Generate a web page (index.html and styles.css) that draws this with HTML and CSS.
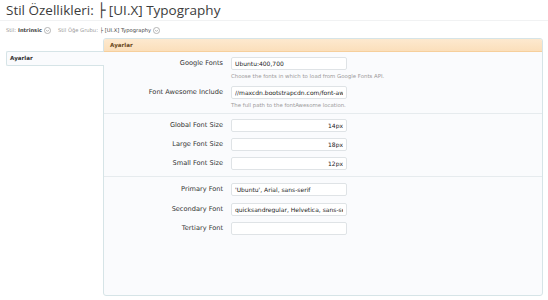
FILE: index.html
```html
<!DOCTYPE html>
<html lang="tr">
<head>
    <meta charset="UTF-8">
    <title>Stil Özellikleri</title>
    <link rel="stylesheet" href="styles.css">
</head>
<body>
    <h1 class="page-title">Stil Özellikleri: ├ [UI.X] Typography</h1>
    <div class="crumbs">
        <span class="crumb-label">Stil:</span> <b>Intrinsic</b>
        <span class="drop"><svg viewBox="0 0 8 8"><circle cx="4" cy="4" r="3.5"/><path d="M2.3 3.3 4 5 5.7 3.3"/></svg></span>
        <span class="crumb-label gap">Stil Öğe Grubu:</span> <span class="crumb-val">├ [UI.X] Typography</span>
        <span class="drop"><svg viewBox="0 0 8 8"><circle cx="4" cy="4" r="3.5"/><path d="M2.3 3.3 4 5 5.7 3.3"/></svg></span>
    </div>

    <div class="layout">
        <ul class="tabs">
            <li class="tab active">Ayarlar</li>
        </ul>
        <div class="panel">
            <div class="panel-head">Ayarlar</div>

            <div class="section first">
                <div class="row">
                    <label class="row-label">Google Fonts</label>
                    <div class="row-field">
                        <input type="text" value="Ubuntu:400,700">
                        <p class="hint">Choose the fonts in which to load from Google Fonts API.</p>
                    </div>
                </div>
                <div class="row">
                    <label class="row-label">Font Awesome Include</label>
                    <div class="row-field">
                        <input type="text" value="//maxcdn.bootstrapcdn.com/font-awesome/4.2.0/css/font-awesome.min.css">
                        <p class="hint">The full path to the fontAwesome location.</p>
                    </div>
                </div>
            </div>

            <div class="section sizes">
                <div class="row">
                    <label class="row-label">Global Font Size</label>
                    <div class="row-field"><input type="text" class="num" value="14px"></div>
                </div>
                <div class="row">
                    <label class="row-label">Large Font Size</label>
                    <div class="row-field"><input type="text" class="num" value="18px"></div>
                </div>
                <div class="row">
                    <label class="row-label">Small Font Size</label>
                    <div class="row-field"><input type="text" class="num" value="12px"></div>
                </div>
            </div>

            <div class="section fonts">
                <div class="row">
                    <label class="row-label">Primary Font</label>
                    <div class="row-field"><input type="text" value="'Ubuntu', Arial, sans-serif"></div>
                </div>
                <div class="row">
                    <label class="row-label">Secondary Font</label>
                    <div class="row-field"><input type="text" value="quicksandregular, Helvetica, sans-serif"></div>
                </div>
                <div class="row">
                    <label class="row-label">Tertiary Font</label>
                    <div class="row-field"><input type="text" value=""></div>
                </div>
            </div>
        </div>
    </div>
</body>
</html>
```

FILE: styles.css
```css
*{
    box-sizing: border-box;
    margin: 0;
    padding: 0;
}
body{
    background-color: #fff;
    font-family: "DejaVu Sans", Verdana, sans-serif;
    color: #333;
}
.page-title{
    font-family: "Open Sans", "DejaVu Sans", sans-serif;
    font-weight: normal;
    font-size: 13.5px;
    line-height: 20px;
    color: #3c3c3c;
    padding: 0 6px;
    height: 21px;
    border-bottom: 1px solid #f1f2f3;
}
.crumbs{
    font-size: 5.2px;
    line-height: 10px;
    padding: 1px 6px 0;
    height: 17px;
    color: #999;
    display: flex;
    align-items: center;
    gap: 2px;
}
.crumbs b{
    color: #444;
}
.crumb-val{
    color: #444;
}
.crumbs .gap{
    margin-left: 5px;
}
.drop svg{
    display: block;
    width: 7px;
    height: 7px;
    fill: #fff;
    stroke: #999;
    stroke-width: 0.8;
}
.drop svg path{
    fill: none;
}
.layout{
    display: flex;
    padding: 0 5px 0 6px;
}
.tabs{
    list-style: none;
    width: 98px;
    padding-top: 13px;
    position: relative;
    z-index: 1;
    margin-right: -1px;
}
.tab{
    height: 15px;
    line-height: 13px;
    font-size: 5.6px;
    font-weight: bold;
    color: #333;
    padding-left: 3px;
    background-color: #fafbfd;
    border: 1px solid #d6e4e7;
    border-right: none;
    border-radius: 2px 0 0 2px;
}
.panel{
    flex: 1;
    height: 258px;
    background-color: #fafbfd;
    border: 1px solid #d6e4e7;
    border-radius: 3px;
    overflow: hidden;
}
.panel-head{
    height: 13px;
    line-height: 12px;
    font-size: 5.6px;
    font-weight: bold;
    color: #6b4a22;
    padding-left: 6px;
    background: linear-gradient(#fde9cf, #fbdfbb);
    border-bottom: 1px solid #f6cf9c;
}
.section{
    padding: 5px 0 6px;
    border-bottom: 1px solid #e6ebee;
}
.section.first{
    padding-top: 5px;
    padding-bottom: 4px;
}
.section.fonts{
    border-bottom: none;
    padding-top: 6px;
}
.row{
    display: flex;
    align-items: flex-start;
}
.row + .row{
    margin-top: 6px;
}
.fonts .row:nth-child(2){
    margin-top: 7px;
}
.row-label{
    width: 127px;
    text-align: right;
    padding-right: 8px;
    font-size: 6.6px;
    line-height: 13px;
    color: #333;
}
.row-field{
    width: 116px;
}
.row-field input{
    display: block;
    width: 116px;
    height: 13px;
    padding: 0 3px;
    font-family: "DejaVu Sans", Verdana, sans-serif;
    font-size: 6px;
    color: #222;
    background-color: #fff;
    border: 1px solid #dfe3e6;
    border-radius: 2px;
    outline: none;
}
.row-field input.num{
    text-align: right;
}
.hint{
    font-size: 5.4px;
    line-height: 8px;
    margin-top: 2px;
    color: #9a9a9a;
    white-space: nowrap;
}
```
